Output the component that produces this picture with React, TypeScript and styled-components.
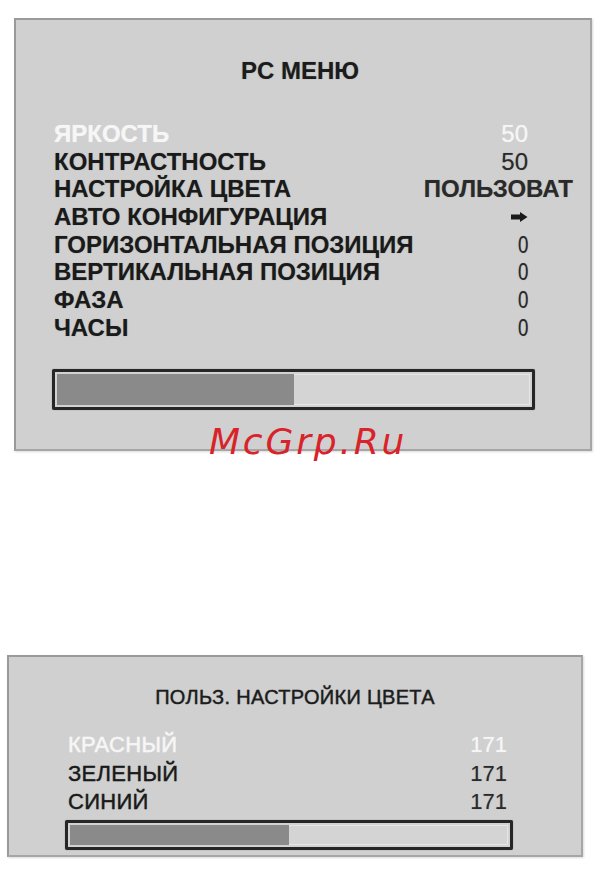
import * as React from "react";
import styled, { createGlobalStyle } from "styled-components";

// ページ全体の基本スタイル
const GlobalStyle = createGlobalStyle`
  html, body {
    margin: 0;
    padding: 0;
    background: #ffffff;
  }
  body {
    font-family: "Liberation Sans", Arial, sans-serif;
  }
`;

const Page = styled.div`
  position: relative;
  width: 601px;
  height: 879px;
  display: flex;
  flex-direction: column;
`;

// OSDパネル
const Panel = styled.div<{ $left: number; $top: number; $width: number; $height: number }>`
  box-sizing: border-box;
  margin-left: ${(p) => p.$left}px;
  margin-top: ${(p) => p.$top}px;
  width: ${(p) => p.$width}px;
  height: ${(p) => p.$height}px;
  background: #d0d0d0;
  border: 2px solid #a6a6a6;
  border-top-color: #9a9a9a;
  border-left-color: #9a9a9a;
  box-shadow: 1px 1px 2px rgba(0, 0, 0, 0.15);
  display: flex;
  flex-direction: column;
`;

const Title = styled.div<{ $size: number; $bold?: boolean }>`
  text-align: center;
  font-size: ${(p) => p.$size}px;
  line-height: ${(p) => p.$size + 4}px;
  font-weight: ${(p) => (p.$bold ? 700 : 400)};
  letter-spacing: ${(p) => (p.$bold ? "0" : "0.3px")};
  -webkit-text-stroke: ${(p) => (p.$bold ? "0" : "0.3px")} currentColor;
  color: #1c1c1c;
  text-shadow: 0 0 1px rgba(0, 0, 0, 0.35);
`;

const Rows = styled.div<{ $padLeft: number; $padRight: number }>`
  display: flex;
  flex-direction: column;
  padding: 0 ${(p) => p.$padRight}px 0 ${(p) => p.$padLeft}px;
`;

const Row = styled.div<{ $size: number; $height: number; $bold?: boolean }>`
  display: grid;
  grid-template-columns: 1fr auto;
  align-items: center;
  height: ${(p) => p.$height}px;
  font-size: ${(p) => p.$size}px;
  line-height: ${(p) => p.$height}px;
  font-weight: ${(p) => (p.$bold ? 700 : 400)};
`;

const Label = styled.span<{ $active?: boolean; $spacing: number; $stroke: number }>`
  color: ${(p) => (p.$active ? "#f6f6f6" : "#1a1a1a")};
  letter-spacing: ${(p) => p.$spacing}px;
  -webkit-text-stroke: ${(p) => p.$stroke}px currentColor;
  text-shadow: 0 0 1px ${(p) => (p.$active ? "rgba(255,255,255,0.6)" : "rgba(0,0,0,0.35)")};
  white-space: nowrap;
`;

const Value = styled.span<{ $active?: boolean; $overhang?: number; $narrow?: boolean; $light?: boolean }>`
  justify-self: end;
  display: flex;
  align-items: center;
  margin-right: ${(p) => -(p.$overhang ?? 0)}px;
  color: ${(p) => (p.$active ? "#f6f6f6" : "#2a2a2a")};
  font-weight: ${(p) => (p.$light ? 400 : "inherit")};
  letter-spacing: 0;
  transform: ${(p) => (p.$narrow ? "scaleX(0.78)" : "none")};
  transform-origin: right center;
  text-shadow: 0 0 1px ${(p) => (p.$active ? "rgba(255,255,255,0.6)" : "rgba(0,0,0,0.3)")};
  white-space: nowrap;
`;

// プログレスバー
const Bar = styled.div<{ $height: number }>`
  box-sizing: border-box;
  height: ${(p) => p.$height}px;
  border: 3px solid #262626;
  border-radius: 2px;
  background: #d2d2d2;
  padding: 2px;
  box-shadow: 0 0 1px rgba(0, 0, 0, 0.5);
  display: flex;
`;

const BarTrack = styled.div`
  flex: 1;
  display: flex;
  background: #d4d4d4;
  box-shadow: inset 0 0 0 1px #e6e6e6;
`;

const BarFill = styled.div`
  background: #8a8a8a;
  height: 100%;
`;

const BarArea = styled.div<{ $gap: number; $padLeft: number; $padRight: number }>`
  margin-top: ${(p) => p.$gap}px;
  padding: 0 ${(p) => p.$padRight}px 0 ${(p) => p.$padLeft}px;
`;

const Watermark = styled.div`
  position: absolute;
  left: 209px;
  top: 424px;
  font-family: "DejaVu Sans", sans-serif;
  font-style: italic;
  font-size: 36px;
  line-height: 36px;
  letter-spacing: 2.8px;
  color: #d8232a;
`;

const Arrow = () => (
  <svg width="17" height="10" viewBox="0 0 17 10">
    <path d="M0 2.5 H9 V0 L16.5 5 L9 10 V7.5 H0 Z" fill="#1a1a1a" />
  </svg>
);

type Item = {
  label: string;
  value: React.ReactNode;
  overhang?: number;
  narrow?: boolean;
  light?: boolean;
};

const pcItems: Item[] = [
  { label: "ЯРКОСТЬ", value: "50", light: true },
  { label: "КОНТРАСТНОСТЬ", value: "50", light: true },
  { label: "НАСТРОЙКА ЦВЕТА", value: "ПОЛЬЗОВАТ", overhang: 45 },
  { label: "АВТО КОНФИГУРАЦИЯ", value: <Arrow /> },
  { label: "ГОРИЗОНТАЛЬНАЯ ПОЗИЦИЯ", value: "0", narrow: true, light: true },
  { label: "ВЕРТИКАЛЬНАЯ ПОЗИЦИЯ", value: "0", narrow: true, light: true },
  { label: "ФАЗА", value: "0", narrow: true, light: true },
  { label: "ЧАСЫ", value: "0", narrow: true, light: true },
];

const colorItems: Item[] = [
  { label: "КРАСНЫЙ", value: "171" },
  { label: "ЗЕЛЕНЫЙ", value: "171" },
  { label: "СИНИЙ", value: "171" },
];

export default function App() {
  return (
    <>
      <GlobalStyle />
      <Page>
        {/* PC МЕНЮ */}
        <Panel $left={14} $top={18} $width={578} $height={433} style={{ paddingTop: 37 }}>
          <Title $size={24} $bold style={{ paddingRight: 6 }}>
            PC МЕНЮ
          </Title>
          <Rows $padLeft={38} $padRight={62} style={{ marginTop: 35 }}>
            {pcItems.map((item, i) => (
              <Row key={item.label} $size={24} $height={27.7} $bold>
                <Label $active={i === 0} $spacing={0} $stroke={0}>
                  {item.label}
                </Label>
                <Value
                  $active={i === 0}
                  $overhang={item.overhang}
                  $narrow={item.narrow}
                  $light={item.light}
                >
                  {item.value}
                </Value>
              </Row>
            ))}
          </Rows>
          <BarArea $gap={27} $padLeft={36} $padRight={55}>
            <Bar $height={41}>
              <BarTrack>
                <BarFill style={{ width: "50%" }} />
              </BarTrack>
            </Bar>
          </BarArea>
        </Panel>

        {/* ПОЛЬЗ. НАСТРОЙКИ ЦВЕТА */}
        <Panel $left={7} $top={204} $width={576} $height={202} style={{ paddingTop: 28 }}>
          <Title $size={20}>ПОЛЬЗ. НАСТРОЙКИ ЦВЕТА</Title>
          <Rows $padLeft={59} $padRight={74} style={{ marginTop: 22 }}>
            {colorItems.map((item, i) => (
              <Row key={item.label} $size={22} $height={28.5}>
                <Label $active={i === 0} $spacing={0.3} $stroke={0.3}>
                  {item.label}
                </Label>
                <Value $active={i === 0} $light>
                  {item.value}
                </Value>
              </Row>
            ))}
          </Rows>
          <BarArea $gap={3} $padLeft={56} $padRight={68}>
            <Bar $height={30}>
              <BarTrack>
                <BarFill style={{ width: "50%" }} />
              </BarTrack>
            </Bar>
          </BarArea>
        </Panel>

        <Watermark>McGrp.Ru</Watermark>
      </Page>
    </>
  );
}
